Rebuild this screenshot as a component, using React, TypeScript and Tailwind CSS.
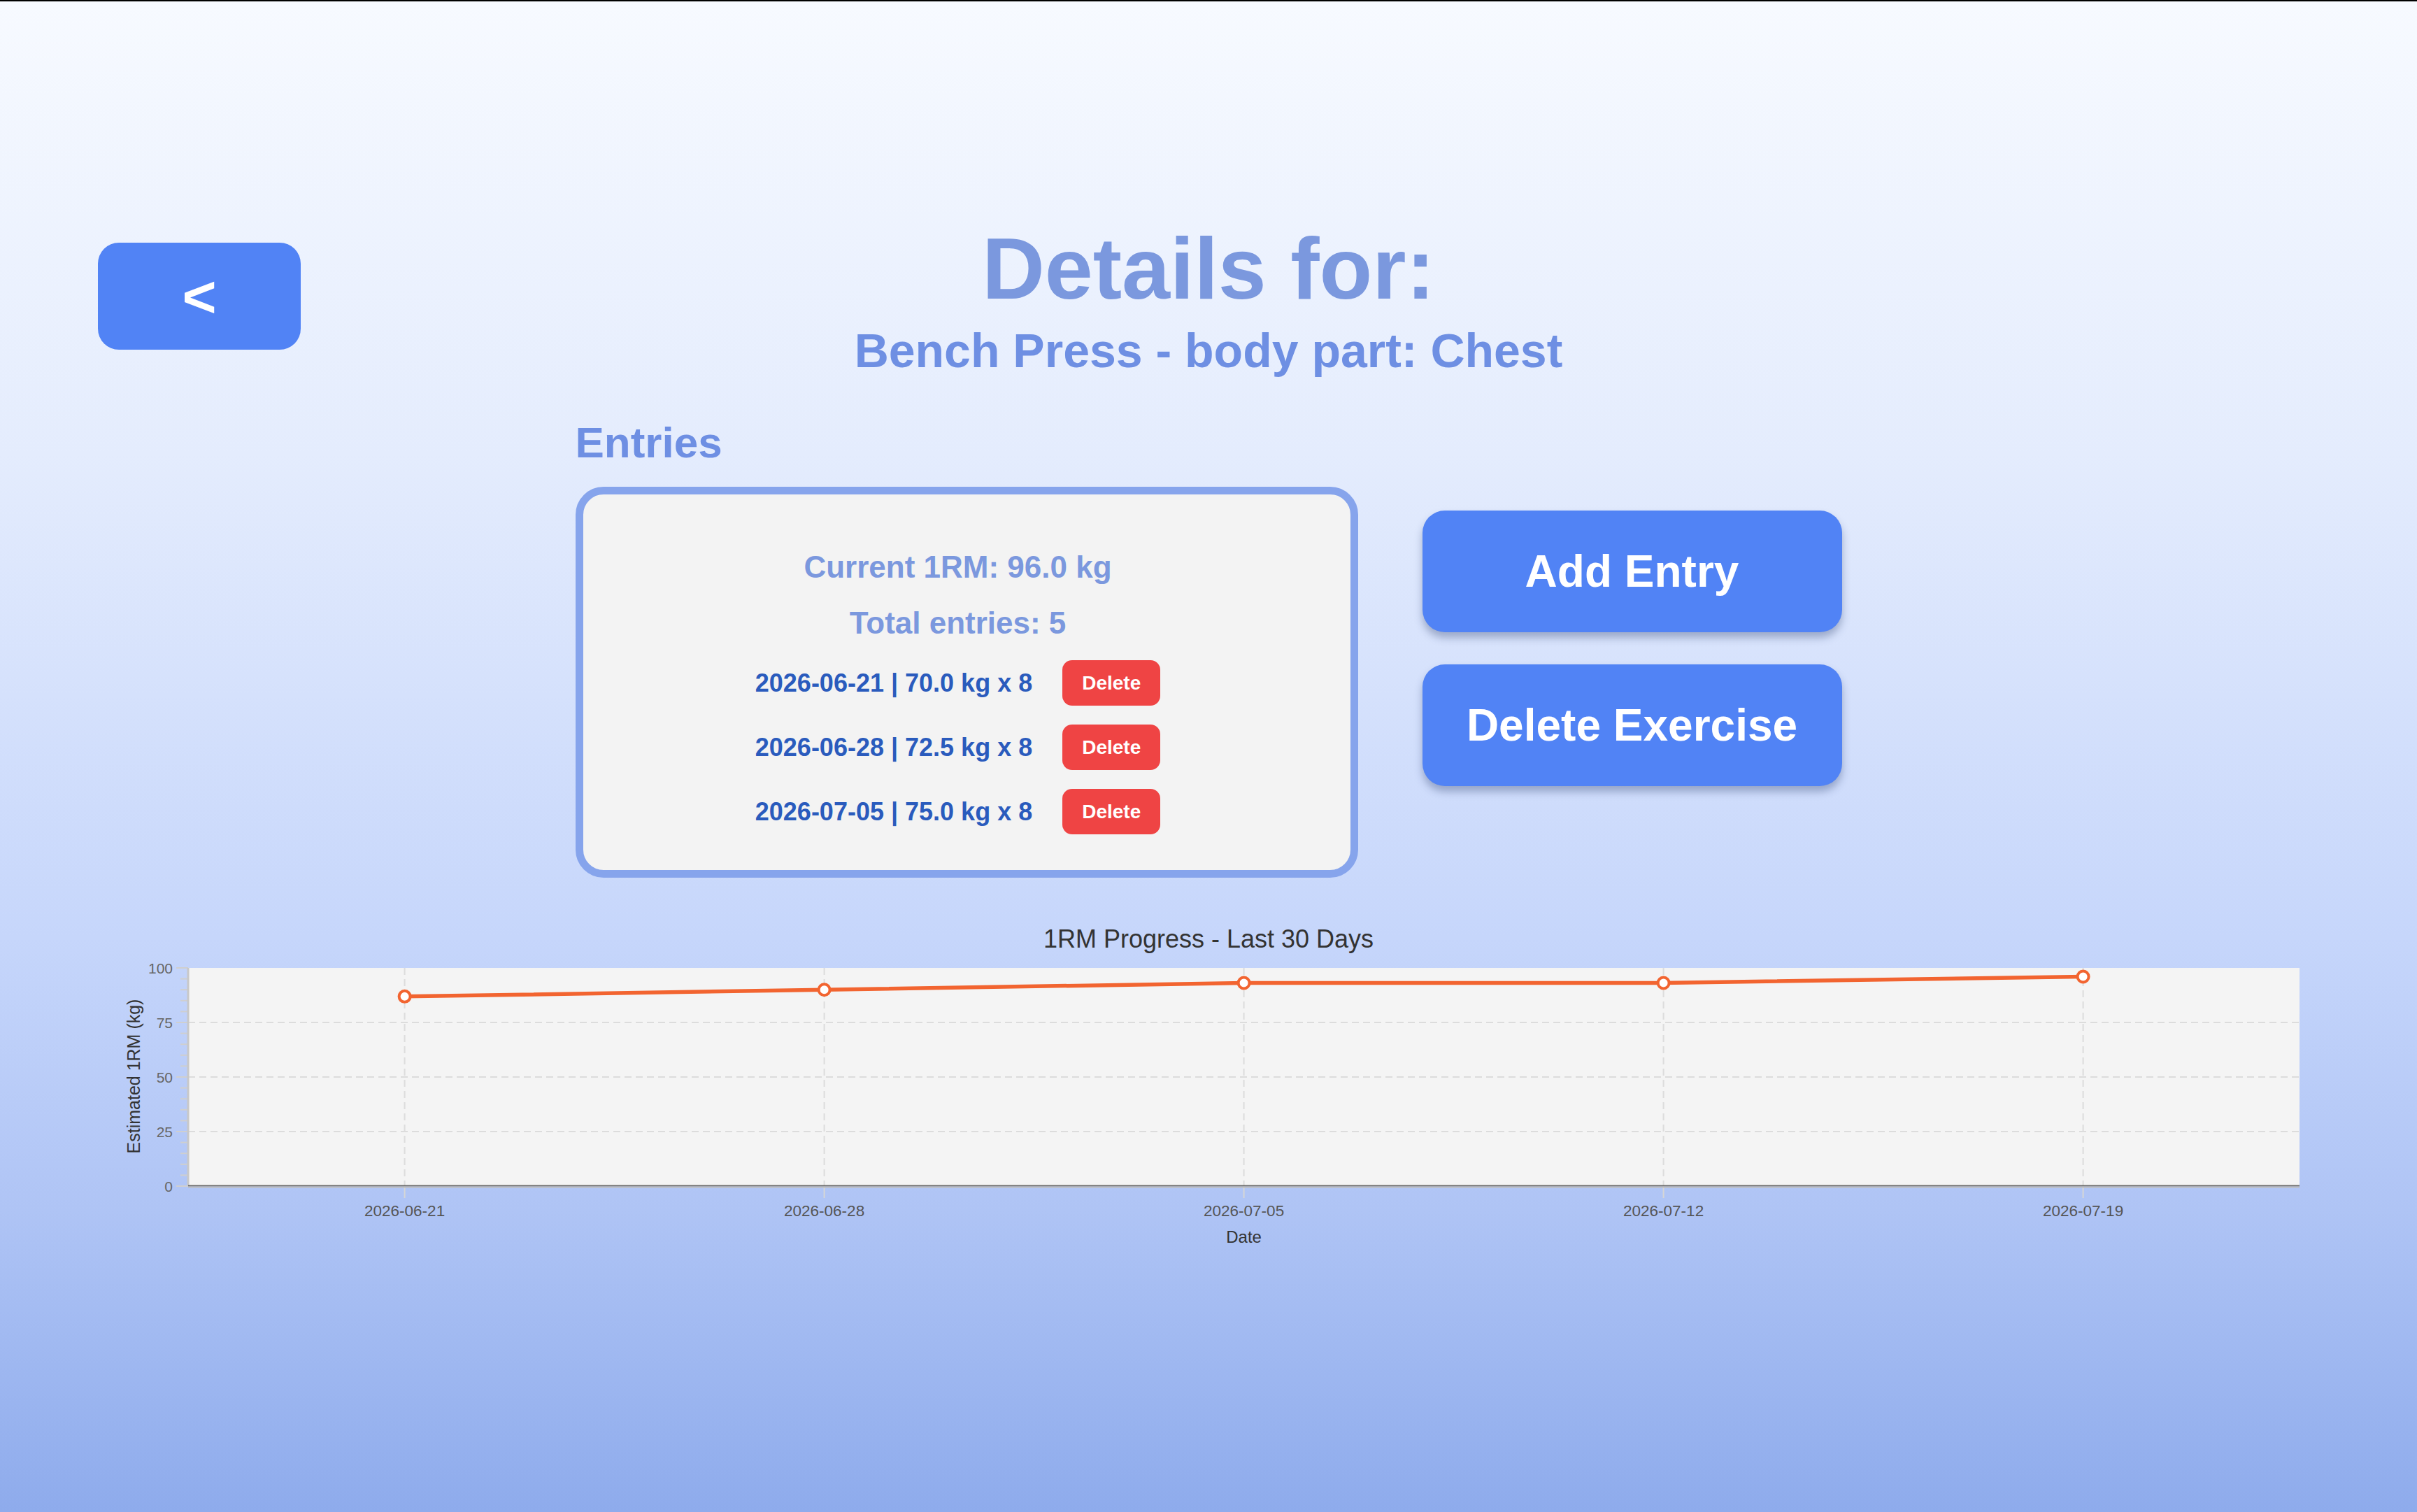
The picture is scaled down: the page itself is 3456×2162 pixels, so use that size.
import React from "react";

const entries = [
  { date: "2026-06-21", weight: "70.0", reps: 8 },
  { date: "2026-06-28", weight: "72.5", reps: 8 },
  { date: "2026-07-05", weight: "75.0", reps: 8 },
];

const xs = [578.6, 1178.6, 1778.6, 2378.6, 2978.6];
const labels = ["2026-06-21", "2026-06-28", "2026-07-05", "2026-07-12", "2026-07-19"];
const values = [86.9, 90.0, 93.1, 93.1, 96.0];
const PLOT_L = 269;
const PLOT_R = 3288;
const PLOT_T = 1384;
const PLOT_B = 1696;
const yOf = (v: number) => PLOT_B - (v / 100) * (PLOT_B - PLOT_T);

function Chart() {
  const minor: number[] = [];
  for (let v = 0; v <= 100; v += 5) minor.push(v);
  const pts = values.map((v, i) => `${xs[i]},${yOf(v)}`).join(" ");
  return (
    <svg
      width={3456}
      height={520}
      viewBox="0 1300 3456 520"
      className="block"
      style={{ fontFamily: "'Liberation Sans', Arial, sans-serif" }}
    >
      <text x={1728} y={1355} textAnchor="middle" fontSize={36} fill="#333333">
        1RM Progress - Last 30 Days
      </text>
      <rect x={PLOT_L} y={PLOT_T} width={PLOT_R - PLOT_L} height={PLOT_B - PLOT_T} fill="#f4f4f4" />
      {[25, 50, 75].map((v) => (
        <line
          key={v}
          x1={PLOT_L}
          x2={PLOT_R}
          y1={yOf(v)}
          y2={yOf(v)}
          stroke="#dcdcdc"
          strokeWidth={2}
          strokeDasharray="10 6"
        />
      ))}
      {xs.map((x) => (
        <g key={x}>
          <line x1={x} x2={x} y1={PLOT_T} y2={PLOT_B} stroke="#dcdcdc" strokeWidth={2} strokeDasharray="10 6" />
          <line x1={x} x2={x} y1={PLOT_B} y2={PLOT_B + 17} stroke="#d6d6d6" strokeWidth={2} />
        </g>
      ))}
      {minor.map((v) => (
        <line
          key={v}
          x1={v % 25 === 0 ? 252 : 258}
          x2={PLOT_L}
          y1={yOf(v)}
          y2={yOf(v)}
          stroke="#cfcfcf"
          strokeWidth={2}
        />
      ))}
      <line x1={PLOT_L} x2={PLOT_L} y1={PLOT_T} y2={PLOT_B} stroke="#c8c8c8" strokeWidth={3} />
      <line x1={PLOT_L} x2={PLOT_R} y1={PLOT_B - 0.5} y2={PLOT_B - 0.5} stroke="#6b6b6b" strokeWidth={2} />
      <line x1={PLOT_L} x2={PLOT_R} y1={PLOT_B + 1.5} y2={PLOT_B + 1.5} stroke="#bdbdbd" strokeWidth={2} />
      {[0, 25, 50, 75, 100].map((v) => (
        <text key={v} x={247} y={yOf(v) + 7.5} textAnchor="end" fontSize={21} fill="#666666">
          {v}
        </text>
      ))}
      {labels.map((l, i) => (
        <text key={l} x={xs[i]} y={1739} textAnchor="middle" fontSize={22.5} fill="#555555">
          {l}
        </text>
      ))}
      <text x={1778.6} y={1777} textAnchor="middle" fontSize={24} fill="#333333">
        Date
      </text>
      <text
        x={200}
        y={1539}
        textAnchor="middle"
        fontSize={25}
        fill="#333333"
        transform="rotate(-90 200 1539)"
      >
        Estimated 1RM (kg)
      </text>
      <polyline points={pts} fill="none" stroke="#f26430" strokeWidth={5.5} strokeLinejoin="round" />
      {values.map((v, i) => (
        <circle key={i} cx={xs[i]} cy={yOf(v)} r={8} fill="#ffffff" stroke="#f26430" strokeWidth={4} />
      ))}
    </svg>
  );
}

export default function App() {
  return (
    <div className="relative h-[2162px] w-full overflow-hidden bg-[linear-gradient(180deg,#f7faff_0%,#e4ecfd_30%,#c6d6fb_62%,#afc4f5_80%,#8eabec_100%)] font-['Liberation_Sans',Arial,sans-serif]">
      <div className="h-[2px] w-full bg-black" />

      <header className="grid grid-cols-[1fr_auto_1fr] pt-[320px]">
        <div className="flex items-start">
          <button className="ml-[140px] mt-[25px] flex h-[153px] w-[290px] items-center justify-center rounded-[30px] bg-[#5183f5] text-[84px] font-bold leading-none text-white">
            &lt;
          </button>
        </div>
        <div className="flex flex-col items-center">
          <h1 className="text-[124px] font-bold leading-none text-[#7b98de]">Details for:</h1>
          <h2 className="mt-[21px] text-[68px] font-bold leading-none text-[#6e8fe3]">
            Bench Press - body part: Chest
          </h2>
        </div>
        <div />
      </header>

      <main className="flex items-start justify-center gap-[92px]">
        <section className="flex flex-col">
          <h3 className="mt-[67px] text-[62px] font-bold leading-none text-[#6e8fe3]">Entries</h3>
          <div className="mt-[32px] flex h-[559px] w-[1119px] flex-col items-center rounded-[40px] border-[11px] border-[#86a4ec] bg-[#f3f3f3] pr-[25px] pt-[82px]">
            <p className="text-[44px] font-bold leading-none text-[#7b98de]">Current 1RM: 96.0 kg</p>
            <p className="mt-[36px] text-[44px] font-bold leading-none text-[#7b98de]">Total entries: 5</p>
            <ul className="mt-[31px] flex flex-col gap-[27px]">
              {entries.map((e) => (
                <li key={e.date} className="flex h-[65px] items-center justify-center gap-[43px]">
                  <span className="text-[36px] font-bold leading-none text-[#2a5bbd]">
                    {e.date} | {e.weight} kg x {e.reps}
                  </span>
                  <button className="flex h-[65px] w-[140px] items-center justify-center rounded-[14px] bg-[#ef4444] text-[28px] font-bold leading-none text-white">
                    Delete
                  </button>
                </li>
              ))}
            </ul>
          </div>
        </section>

        <aside className="mt-[195px] flex flex-col gap-[46px]">
          <button className="flex h-[174px] w-[600px] items-center justify-center rounded-[32px] bg-[#5183f5] text-[64px] font-bold leading-none text-white shadow-[0_8px_12px_rgba(40,60,110,0.35)]">
            Add Entry
          </button>
          <button className="flex h-[174px] w-[600px] items-center justify-center rounded-[32px] bg-[#5183f5] text-[64px] font-bold leading-none text-white shadow-[0_8px_12px_rgba(40,60,110,0.35)]">
            Delete Exercise
          </button>
        </aside>
      </main>

      <div className="mt-[45px]">
        <Chart />
      </div>
    </div>
  );
}
